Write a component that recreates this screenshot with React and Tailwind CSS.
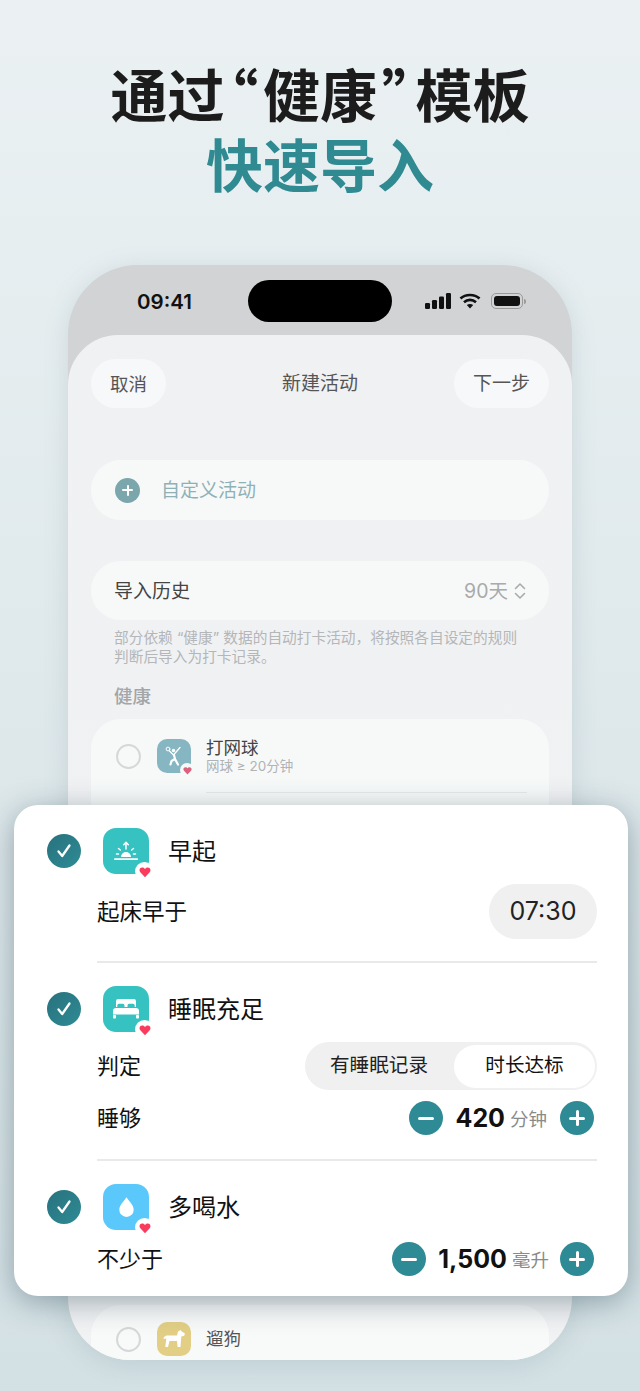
import React from "react";

const CJK = "font-['Inter','Noto_Sans_CJK_SC',sans-serif]";

function Heart({ color = "#fb3b5e", size = 12 }) {
  return (
    <svg width={size} height={size} viewBox="0 0 24 24" fill={color}>
      <path d="M12 22.500 2.600 12.600C-.4 9.400 1 3 6.600 3c2.500 0 4.300 1.300 5.400 3.200C13.100 4.300 14.900 3 17.400 3 23 3 24.400 9.400 21.400 12.600z" />
    </svg>
  );
}

function CheckCircle() {
  return (
    <div className="w-[34px] h-[34px] rounded-full bg-gradient-to-br from-[#27727e] to-[#2f8b94] flex items-center justify-center shrink-0">
      <svg width="20" height="20" viewBox="0 0 20 20" fill="none" stroke="white" strokeWidth="2.300" strokeLinecap="round" strokeLinejoin="round">
        <path d="M4.500 10.500 8.200 15 15.500 4.500" />
      </svg>
    </div>
  );
}

function AppIcon({ bg, children }) {
  return (
    <div className={`relative w-[46px] h-[46px] rounded-[13px] flex items-center justify-center shrink-0 ${bg}`}>
      {children}
      <div className="absolute -right-[5px] -bottom-[7px] w-[19px] h-[19px] rounded-full bg-white flex items-center justify-center">
        <Heart />
      </div>
    </div>
  );
}

function SunIcon() {
  return (
    <svg width="24" height="20" viewBox="0 0 24 20" fill="white" className="-mt-[1px]">
      <path d="M7 16a5 5 0 0 1 10 0z" />
      <rect x="0" y="17.300" width="24" height="1.700" rx="0.800" />
      <path d="M12 8V1.500M9.700 3.700 12 1.300l2.300 2.400" fill="none" stroke="white" strokeWidth="1.500" strokeLinecap="round" strokeLinejoin="round" />
      <path d="M4.500 7.500 6.300 9M19.500 7.500 17.700 9M2.500 13h2M19.500 13h2" fill="none" stroke="white" strokeWidth="1.500" strokeLinecap="round" />
    </svg>
  );
}

function BedIcon() {
  return (
    <svg width="26" height="20" viewBox="0 0 26 20" fill="white">
      <path d="M3 2.200A2.200 2.200 0 0 1 5.200 0h15.600A2.200 2.200 0 0 1 23 2.200V8h-1.300V6.500a1.800 1.800 0 0 0-1.800-1.800h-3.600a1.800 1.800 0 0 0-1.800 1.800V8h-3V6.500a1.800 1.800 0 0 0-1.800-1.800H6.100a1.800 1.800 0 0 0-1.800 1.800V8H3z" />
      <path d="M3 9h20a3 3 0 0 1 3 3v3.500H0V12a3 3 0 0 1 3-3z" />
      <rect x="0" y="16" width="3" height="3.500" rx="0.700" />
      <rect x="23" y="16" width="3" height="3.500" rx="0.700" />
    </svg>
  );
}

function DropIcon() {
  return (
    <svg width="15" height="20" viewBox="0 0 15 20" fill="white">
      <path d="M7.500 0.300C9.500 3.500 14.700 8.200 14.700 12.700A7.200 7.200 0 0 1 .3 12.700C.3 8.200 5.500 3.500 7.500 0.300z" />
    </svg>
  );
}

function TennisIcon() {
  return (
    <svg width="18" height="20" viewBox="0 0 18 20" fill="none" stroke="white" strokeWidth="2.200" strokeLinecap="round" strokeLinejoin="round">
      <circle cx="3" cy="3" r="1.900" strokeWidth="1" />
      <circle cx="8.500" cy="4.500" r="1.700" fill="white" stroke="none" />
      <path d="M4.500 5 8.500 9 15 1.500" strokeWidth="1.300" />
      <path d="M9 9 10 13l3 5.500M10 13 6.500 15l-1 3.500" />
    </svg>
  );
}

function DogIcon() {
  return (
    <svg width="24" height="20" viewBox="0 0 24 20" fill="white">
      <path d="M16 2.500 18.500 1l1.500 1.800 2.800 1.500-.5 2.500-3 .8-.8 10.400h-2.800l-.8-6H7.500L6 18H3.300l1-8.500L1.500 10 2 8l2.500-1.500H15z" />
    </svg>
  );
}

function Stepper({ value, unit, plusGap }) {
  return (
    <div className="flex items-center">
      <div className="w-[34px] h-[34px] rounded-full bg-[#2e8a94] flex items-center justify-center">
        <div className="w-[16px] h-[3px] rounded-full bg-white"></div>
      </div>
      <span className="ml-[12px] text-[25px] leading-none font-bold text-[#111]">{value}</span>
      <span className="ml-[5px] text-[18.500px] leading-none text-[#8a8a8a] pt-[3px]">{unit}</span>
      <div className={`${plusGap} w-[34px] h-[34px] rounded-full bg-[#2e8a94] flex items-center justify-center relative`}>
        <div className="w-[16px] h-[3px] rounded-full bg-white"></div>
        <div className="absolute w-[3px] h-[16px] rounded-full bg-white"></div>
      </div>
    </div>
  );
}

function GoalHeader({ bg, icon, name }) {
  return (
    <div className="flex items-center">
      <CheckCircle />
      <div className="ml-[22px]">
        <AppIcon bg={bg}>{icon}</AppIcon>
      </div>
      <span className="ml-[19px] text-[24px] leading-none text-[#111] pt-[1px]">{name}</span>
    </div>
  );
}

function StatusBar() {
  return (
    <div className="h-[70px] flex items-start">
      <span className="ml-[69px] mt-[24px] w-[53px] text-[20.500px] leading-[26px] font-semibold text-[#111]">09:41</span>
      <div className="ml-[58px] mt-[15px] w-[144px] h-[42px] rounded-full bg-black"></div>
      <div className="ml-[33px] mt-[28px] flex items-center">
        <svg width="26" height="16" viewBox="0 0 26 16" fill="#111">
          <rect x="0" y="10" width="5" height="6" rx="1.200" />
          <rect x="7" y="7" width="5" height="9" rx="1.200" />
          <rect x="14" y="3.500" width="5" height="12.500" rx="1.200" />
          <rect x="21" y="0" width="5" height="16" rx="1.200" />
        </svg>
        <svg width="22" height="16" viewBox="0 0 22 16" fill="none" stroke="#111" strokeWidth="2.700" className="ml-[8px]">
          <path d="M1.500 5.500C6.500.8 15.500.8 20.500 5.500M5 9.200c3.500-3 8.500-3 12 0" />
          <path d="M7.800 12 11 15.500 14.200 12c-2-1.500-4.400-1.500-6.400 0z" fill="#111" stroke="none" />
        </svg>
        <div className="ml-[10px] flex items-center">
          <div className="w-[32px] h-[16px] rounded-[5px] border border-[#9a9a9a] p-[2px]">
            <div className="w-full h-full rounded-[3px] bg-[#111]"></div>
          </div>
          <div className="ml-[1px] w-[2px] h-[5px] rounded-r-full bg-[#9a9a9a]"></div>
        </div>
      </div>
    </div>
  );
}

function PhoneScreen() {
  return (
    <div className="mx-[68px] h-[1095px] rounded-t-[70px] rounded-b-[62px] bg-[#d1d3d4] overflow-hidden shadow-[0_4px_24px_rgba(90,120,130,0.18)]">
      <StatusBar />
      <div className="h-[1025px] rounded-t-[50px] bg-gradient-to-b from-[#f0f1f3] to-[#f1f2f4] px-[23px]">
        {/* Nav */}
        <div className="pt-[24px] flex items-center">
          <div className="flex-1">
            <div className="w-[75px] h-[49px] rounded-full bg-[#f7f8f9] flex items-center justify-center text-[18.500px] text-[#555] pt-[2px]">取消</div>
          </div>
          <span className="text-[19px] text-[#555] pt-[2px]">新建活动</span>
          <div className="flex-1 flex justify-end">
            <div className="w-[95px] h-[49px] rounded-full bg-[#f7f8f9] flex items-center justify-center text-[19px] text-[#555] pt-[2px]">下一步</div>
          </div>
        </div>

        {/* Custom */}
        <div className="mt-[52px] h-[60px] rounded-full bg-[#f7f9f9] flex items-center pl-[24px]">
          <div className="w-[25px] h-[25px] rounded-full bg-[#7ba6ac] flex items-center justify-center relative">
            <div className="w-[11px] h-[2px] bg-white rounded-full"></div>
            <div className="absolute w-[2px] h-[11px] bg-white rounded-full"></div>
          </div>
          <span className="ml-[21px] text-[19px] text-[#8fb1b6] pt-[3px]">自定义活动</span>
        </div>

        {/* Import history */}
        <div className="mt-[41px] h-[59px] rounded-full bg-[#f7f9f9] flex items-center justify-between px-[23px]">
          <span className="text-[19px] text-[#444] pt-[3px]">导入历史</span>
          <div className="flex items-center text-[#a8aaab]">
            <span className="text-[19.500px] pt-[2px]">90天</span>
            <svg width="12" height="18" viewBox="0 0 12 18" fill="none" stroke="#a8aaab" strokeWidth="1.600" strokeLinecap="round" strokeLinejoin="round" className="ml-[6px]">
              <path d="M1.500 6.500 6 2l4.500 4.500M1.500 11.500 6 16l4.500-4.500" />
            </svg>
          </div>
        </div>

        <p className="mt-[9px] pl-[23px] pr-[22px] text-[14.700px] leading-[19px] text-[#b4b6b8]">
          部分依赖 “健康” 数据的自动打卡活动，将按照各自设定的规则判断后导入为打卡记录。
        </p>
        <p className="mt-[16px] px-[23px] text-[18.500px] leading-[26px] font-medium text-[#a3a5a7]">健康</p>

        {/* Health list, the middle is covered by the overlay card */}
        <div className="mt-[10px] h-[572px] rounded-[30px] bg-[#f7f9f9] pt-[20px]">
          <div className="h-[34px] flex items-center pl-[25px]">
            <div className="w-[25px] h-[25px] rounded-full border-2 border-[#d5d7d8]"></div>
            <div className="relative ml-[16px] w-[34px] h-[34px] rounded-[10px] bg-[#86b6c1] flex items-center justify-center">
              <TennisIcon />
              <div className="absolute -right-[3px] -bottom-[4px] w-[14px] h-[14px] rounded-full bg-[#f7f9f9] flex items-center justify-center">
                <Heart color="#d9627e" size={9} />
              </div>
            </div>
            <div className="ml-[15px]">
              <p className="text-[17.500px] leading-[21px] text-[#444]">打网球</p>
              <p className="text-[13.500px] leading-[17px] text-[#b0b2b4]">网球 ≥ 20分钟</p>
            </div>
          </div>
          <div className="mt-[19px] ml-[115px] mr-[22px] h-px bg-[#e6e8e8]"></div>
        </div>

        <div className="mt-[14px] h-[70px] rounded-[30px] bg-[#f8f9f9] pt-[17px]">
          <div className="flex items-center pl-[25px]">
            <div className="w-[25px] h-[25px] rounded-full border-2 border-[#d5d7d8]"></div>
            <div className="ml-[16px] w-[34px] h-[34px] rounded-[10px] bg-[#e2cf85] flex items-center justify-center">
              <DogIcon />
            </div>
            <span className="ml-[15px] text-[17.500px] text-[#555]">遛狗</span>
          </div>
        </div>
      </div>
    </div>
  );
}

function OverlayCard() {
  return (
    <div className="absolute left-[14px] top-[805px] w-[614px] h-[491px] rounded-[24px] bg-white shadow-[0_6px_30px_rgba(40,70,80,0.42)] pl-[33px] pr-[31px] pt-[23px]">
      <GoalHeader bg="bg-[#35c2c1]" icon={<SunIcon />} name="早起" />
      <div className="ml-[50px] mt-[10px] flex items-center justify-between">
        <span className="text-[22.500px] text-[#111]">起床早于</span>
        <div className="w-[108px] h-[55px] rounded-full bg-[#f0f0f0] flex items-center justify-center text-[25px] text-[#222]">07:30</div>
      </div>
      <div className="ml-[50px] mt-[22px] h-[2px] bg-[#e9e9e9]"></div>

      <div className="mt-[23px]">
        <GoalHeader bg="bg-[#35c2c1]" icon={<BedIcon />} name="睡眠充足" />
      </div>
      <div className="ml-[50px] mt-[10px] flex items-center justify-between">
        <span className="text-[22px] text-[#111]">判定</span>
        <div className="w-[292px] h-[48px] rounded-full bg-[#f0f0f0] flex items-center p-[2px]">
          <span className="w-[144px] text-center text-[19.600px] text-[#222]">有睡眠记录</span>
          <span className="ml-[3px] w-[141px] h-[43px] rounded-full bg-white flex items-center justify-center text-[19.600px] text-[#111]">时长达标</span>
        </div>
      </div>
      <div className="ml-[50px] mt-[11px] pr-[3px] flex items-center justify-between">
        <span className="text-[22px] text-[#111]">睡够</span>
        <Stepper value="420" unit="分钟" plusGap="ml-[13px]" />
      </div>
      <div className="ml-[50px] mt-[24px] h-[2px] bg-[#e9e9e9]"></div>

      <div className="mt-[23px]">
        <GoalHeader bg="bg-[#5ac8fa]" icon={<DropIcon />} name="多喝水" />
      </div>
      <div className="ml-[50px] mt-[12px] pr-[3px] flex items-center justify-between">
        <span className="text-[22px] text-[#111]">不少于</span>
        <Stepper value="1,500" unit="毫升" plusGap="ml-[11px]" />
      </div>
    </div>
  );
}

export default function App() {
  return (
    <div className={`relative w-[640px] h-[1391px] overflow-hidden bg-gradient-to-b from-[#ebf1f3] to-[#d3e0e4] ${CJK}`}>
      <div className="pt-[57px] h-[265px] text-center font-['Noto_Sans_CJK_SC',sans-serif] font-bold">
        <h1 className="text-[57px] leading-[70px] text-[#1c1c1c] [font-feature-settings:'palt']">
          通过<span className="mx-[5px]">“</span>健康<span className="mx-[5px]">”</span>模板
        </h1>
        <h2 className="text-[57px] leading-[70px] text-[#2f8a92]">快速导入</h2>
      </div>
      <PhoneScreen />
      <OverlayCard />
    </div>
  );
}
